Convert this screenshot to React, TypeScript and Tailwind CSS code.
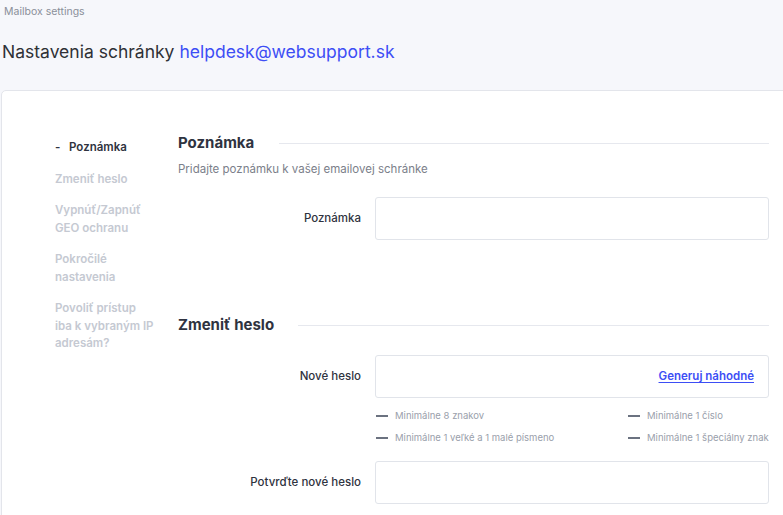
import React from "react";

const font = { fontFamily: "Inter, 'Noto Sans', sans-serif" };

function Req({ text }: { text: string }) {
  return (
    <div className="flex items-center h-[22px]">
      <span className="w-[12px] h-[1.5px] bg-[#6b7280] mr-[7px] shrink-0" />
      <span className="text-[9.5px] text-[#9aa0ab] whitespace-nowrap">{text}</span>
    </div>
  );
}

export default function App() {
  return (
    <div className="w-[783px] h-[515px] overflow-hidden bg-[#f6f7fb]" style={font}>
      <div className="pl-[4px] pt-[5px] text-[10.5px] leading-[13px] text-[#8a8f99]">Mailbox settings</div>
      <div className="pl-[2px] mt-[22px] flex items-center text-[17.5px] leading-[24px]">
        <span className="text-[#2f3136]">Nastavenia schránky</span>
        <span className="ml-[5px] text-[#3d4ef5]">helpdesk@websupport.sk</span>
      </div>
      <div className="ml-[1px] mt-[26px] w-[800px] h-[440px] bg-white border border-[#e3e5eb] rounded-tl-[5px]">
        <div className="flex pt-[41px]">
          <div className="w-[176px] shrink-0 pl-[53px] text-[11.5px] font-semibold leading-[17.5px]">
            <div className="flex items-center text-[#2f3340] mt-[7px]">
              <span className="w-[14px]">-</span>
              <span>Poznámka</span>
            </div>
            <div className="text-[#c5c9d2] mt-[14px]">Zmeniť heslo</div>
            <div className="text-[#c5c9d2] mt-[14px]">Vypnúť/Zapnúť<br />GEO ochranu</div>
            <div className="text-[#c5c9d2] mt-[14px]">Pokročilé<br />nastavenia</div>
            <div className="text-[#c5c9d2] mt-[14px]">Povoliť prístup<br />iba k vybraným IP<br />adresám?</div>
          </div>
          <div className="flex-1 pr-[32px]">
            <div className="flex items-center h-[22px]">
              <span className="text-[15px] font-bold text-[#2f3340]">Poznámka</span>
              <span className="ml-[25px] flex-1 h-px bg-[#e6e8ee]" />
            </div>
            <div className="mt-[7px] text-[11.5px] leading-[16px] text-[#7b808a]">Pridajte poznámku k vašej emailovej schránke</div>
            <div className="mt-[20px] flex items-center">
              <div className="w-[197px] text-right pr-[14px] text-[11.5px] font-medium text-[#2f3340]">Poznámka</div>
              <div className="w-[394px] h-[43px] border border-[#e1e4ea] rounded-[3px]" />
            </div>
            <div className="mt-[74px] flex items-center h-[22px]">
              <span className="text-[15px] font-bold text-[#2f3340]">Zmeniť heslo</span>
              <span className="ml-[24px] flex-1 h-px bg-[#e6e8ee]" />
            </div>
            <div className="mt-[19px] flex items-center">
              <div className="w-[197px] text-right pr-[14px] text-[11.5px] font-medium text-[#2f3340]">Nové heslo</div>
              <div className="w-[394px] h-[43px] border border-[#e1e4ea] rounded-[3px] flex items-center justify-end pr-[14px]">
                <span className="text-[11.5px] font-semibold text-[#3d4ef5] underline underline-offset-2">Generuj náhodné</span>
              </div>
            </div>
            <div className="ml-[198px] mt-[7px] grid grid-cols-[252px_1fr]">
              <Req text="Minimálne 8 znakov" />
              <Req text="Minimálne 1 číslo" />
              <Req text="Minimálne 1 veľké a 1 malé písmeno" />
              <Req text="Minimálne 1 špeciálny znak" />
            </div>
            <div className="mt-[12px] flex items-center">
              <div className="w-[197px] text-right pr-[14px] text-[11.5px] font-medium text-[#2f3340]">Potvrďte nové heslo</div>
              <div className="w-[394px] h-[43px] border border-[#e1e4ea] rounded-[3px]" />
            </div>
          </div>
        </div>
      </div>
    </div>
  );
}
